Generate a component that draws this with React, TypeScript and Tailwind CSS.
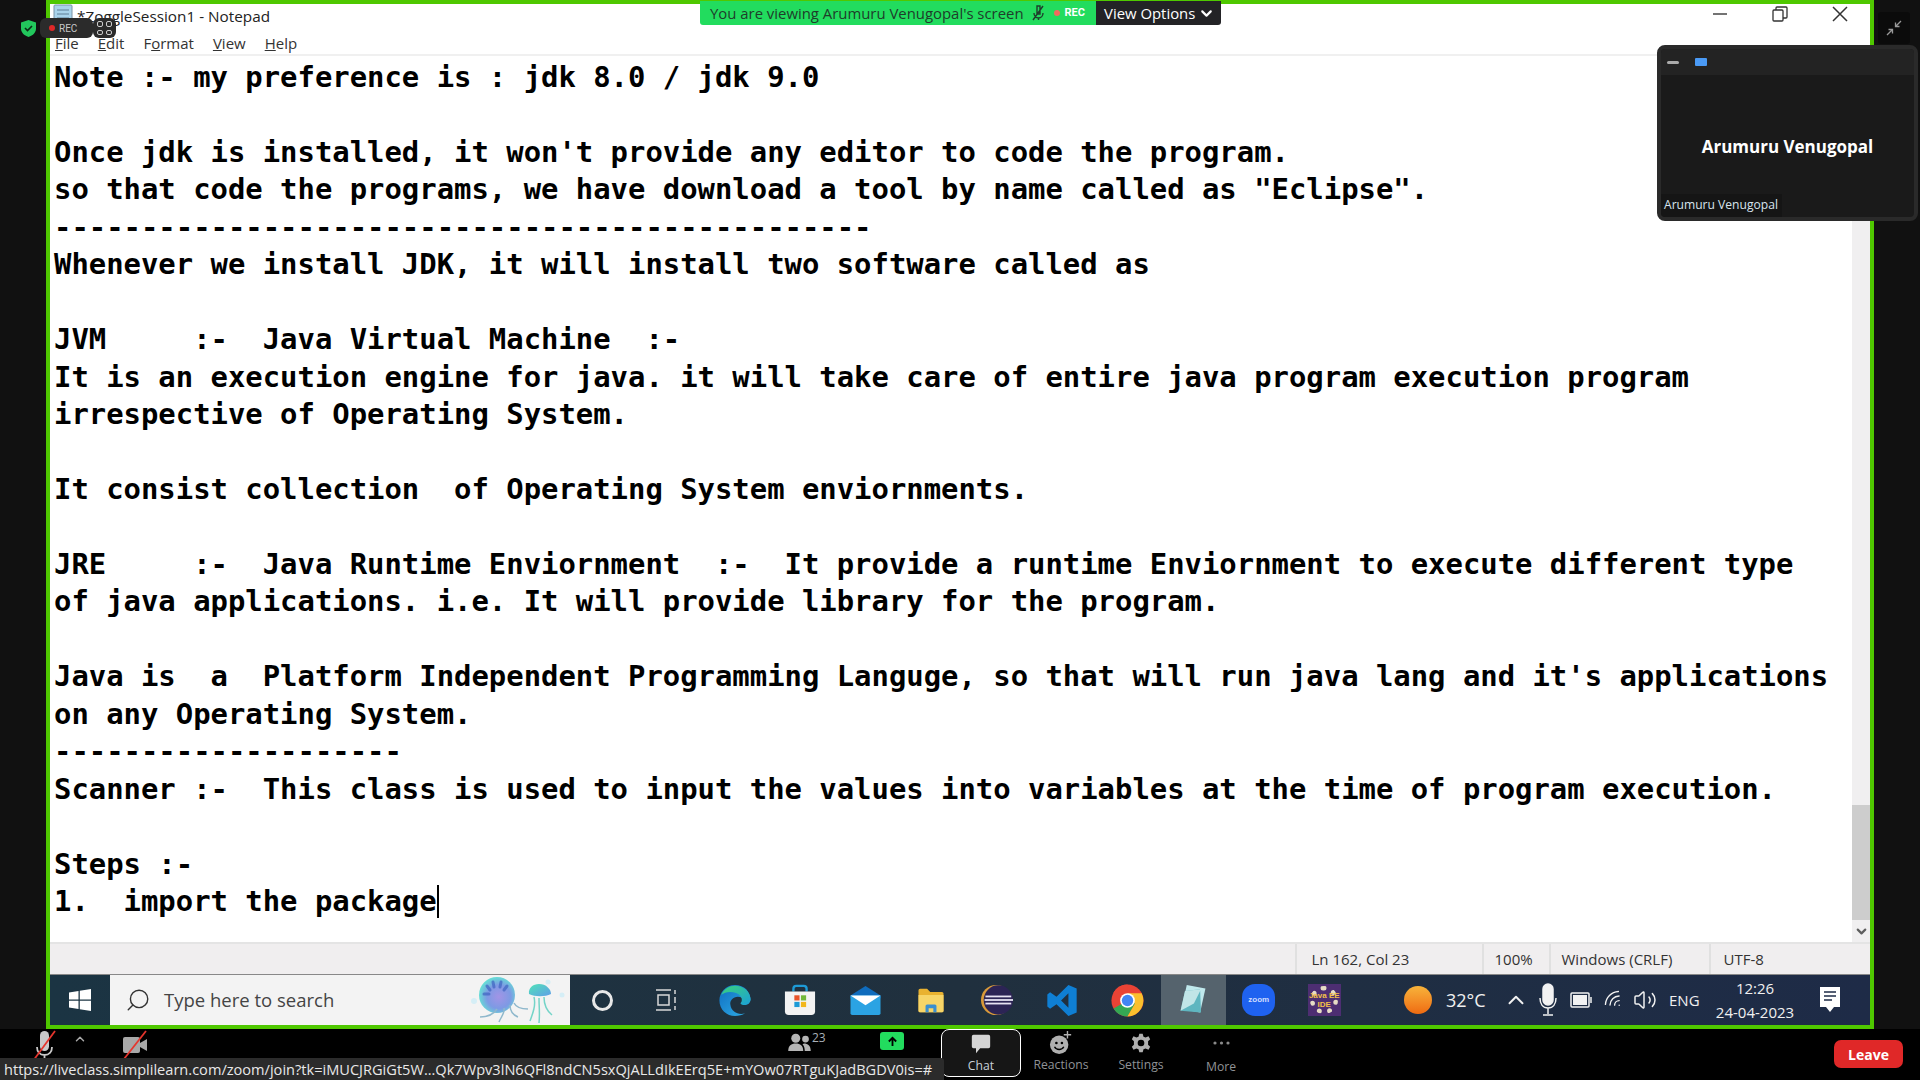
import React from "react";
import { ChevronDown, ChevronUp, Search, Volume2, Wifi } from "lucide-react";

const noteLines = [
  "Note :- my preference is : jdk 8.0 / jdk 9.0",
  "",
  "Once jdk is installed, it won't provide any editor to code the program.",
  'so that code the programs, we have download a tool by name called as "Eclipse".',
  "-----------------------------------------------",
  "Whenever we install JDK, it will install two software called as",
  "",
  "JVM     :-  Java Virtual Machine  :-",
  "It is an execution engine for java. it will take care of entire java program execution program",
  "irrespective of Operating System.",
  "",
  "It consist collection  of Operating System enviornments.",
  "",
  "JRE     :-  Java Runtime Enviornment  :-  It provide a runtime Enviornment to execute different type",
  "of java applications. i.e. It will provide library for the program.",
  "",
  "Java is  a  Platform Independent Programming Languge, so that will run java lang and it's applications",
  "on any Operating System.",
  "--------------------",
  "Scanner :-  This class is used to input the values into variables at the time of program execution.",
  "",
  "Steps :-",
];

const TaskCell = ({ children, active }: { children: React.ReactNode; active?: boolean }) => (
  <div className={`w-[65.5px] h-full flex items-center justify-center shrink-0 ${active ? "bg-[#55636d]" : ""}`}>{children}</div>
);

const ToolButton = ({ icon, label, active, low }: { icon: React.ReactNode; label: string; active?: boolean; low?: boolean }) => (
  <div
    className={`w-[80px] h-[48px] flex flex-col items-center justify-start shrink-0 ${
      active ? "border border-white rounded-lg bg-[#161616] text-[#c8d0d8]" : "text-[#8f9296]"
    }`}
  >
    <div className="h-[27px] flex items-center justify-center shrink-0">{icon}</div>
    <span className={`text-[12.200px] leading-[18px] ${low ? "mt-[2px]" : ""}`}>{label}</span>
  </div>
);

const StartLogo = () => (
  <svg width="24" height="24" viewBox="0 0 24 24" fill="#fff">
    <path d="M1 4.500 10.500 3v8.400H1zM11.800 2.800 23 1v10.400H11.800zM1 12.700h9.500V21L1 19.600zM11.800 12.700H23V23l-11.200-1.800z" />
  </svg>
);

const Jellyfish = () => (
  <svg width="100" height="50" viewBox="0 0 100 50" fill="none">
    <defs>
      <radialGradient id="jelly-a" cx="0.55" cy="0.55" r="0.55">
        <stop offset="0" stopColor="#a294e6" />
        <stop offset="0.6" stopColor="#7d9ae4" />
        <stop offset="1" stopColor="#66dcd6" />
      </radialGradient>
      <linearGradient id="jelly-b" x1="0" y1="0" x2="1" y2="1">
        <stop offset="0" stopColor="#4fe3b8" />
        <stop offset="1" stopColor="#5f9ee8" />
      </linearGradient>
    </defs>
    <circle cx="27" cy="20" r="18" fill="url(#jelly-a)" />
    <g stroke="#3f63c0" strokeWidth="3" strokeLinecap="round" opacity="0.7">
      <path d="M23 7l1 5M31 7l-1 5M17 11l3 4M37 11l-3 4M14 19h5" />
    </g>
    <path d="M27 34c-4 6-10 8-17 8M34 33c1 5-3 9-5 14M40 30c0 6 3 10 8 12M44 28c2 4 8 6 14 6" stroke="#8fb8cc" strokeWidth="1.500" />
    <path d="M59 19c-1-6 4-10 10-10 7 0 12 5 12 10-6 3-16 3-22 0z" fill="url(#jelly-b)" />
    <path d="M64 22c2 8-1 16-4 24M69 23c0 9 1 15 0 25M74 22c0 8 3 14 8 18" stroke="#74d4c8" strokeWidth="1.500" />
    <circle cx="4" cy="26" r="3" fill="#d5eef6" />
    <circle cx="78" cy="7" r="2.500" fill="#d5eef6" />
    <circle cx="92" cy="20" r="2.500" fill="#d5eef6" />
  </svg>
);

const EdgeIcon = () => (
  <svg width="34" height="33" viewBox="0 0 36 36">
    <defs>
      <linearGradient id="edge-a" x1="0" y1="0" x2="1" y2="1">
        <stop offset="0" stopColor="#3bd27a" />
        <stop offset="1" stopColor="#1a9fd8" />
      </linearGradient>
      <linearGradient id="edge-b" x1="0" y1="0" x2="1" y2="1">
        <stop offset="0" stopColor="#0f6cc0" />
        <stop offset="1" stopColor="#2fb0e8" />
      </linearGradient>
    </defs>
    <path d="M18 1C8 1 1 9 1 18c0 10 8 17 17 17 4 0 8-1 11-3-7 2-15-1-16-9-1-5 3-9 8-9 4 0 6 2 7 4h7C35 8 28 1 18 1z" fill="url(#edge-b)" />
    <path d="M3 12C6 5 12 2 18 2c9 0 16 6 17 14 0 5-3 7-7 7-2 0-4-1-4-2 2-2 2-5 0-8-4-5-16-6-21-1z" fill="url(#edge-a)" />
  </svg>
);

const StoreIcon = () => (
  <svg width="32" height="32" viewBox="0 0 34 34">
    <path d="M10 8V5a3 3 0 0 1 3-3h8a3 3 0 0 1 3 3v3" fill="none" stroke="#1d9ad6" strokeWidth="2.500" />
    <path d="M1 8h32v21a4 4 0 0 1-4 4H5a4 4 0 0 1-4-4z" fill="#f3f3f3" />
    <rect x="11" y="12" width="5.500" height="5.500" fill="#e8542a" />
    <rect x="18" y="12" width="5.500" height="5.500" fill="#72b83a" />
    <rect x="11" y="19" width="5.500" height="5.500" fill="#1d9ad6" />
    <rect x="18" y="19" width="5.500" height="5.500" fill="#f2b71d" />
  </svg>
);

const MailIcon = () => (
  <svg width="33" height="30" viewBox="0 0 36 34">
    <path d="M1 12 18 1l17 11v3H1z" fill="#0f6cbd" />
    <path d="M1 12h34v20a2 2 0 0 1-2 2H3a2 2 0 0 1-2-2z" fill="#2ba3e3" />
    <path d="M1 12h34L18 23z" fill="#fff" />
  </svg>
);

const FolderIcon = () => (
  <svg width="30" height="25" viewBox="0 0 34 32">
    <path d="M1 3a2 2 0 0 1 2-2h9l4 4h15a2 2 0 0 1 2 2v22a2 2 0 0 1-2 2H3a2 2 0 0 1-2-2z" fill="#e9b230" />
    <path d="M1 9h32v20a2 2 0 0 1-2 2H3a2 2 0 0 1-2-2z" fill="#f7d568" />
    <path d="M10 31v-8a2 2 0 0 1 2-2h10a2 2 0 0 1 2 2v8h-4v-5h-6v5z" fill="#3a8fd0" />
  </svg>
);

const EclipseIcon = () => (
  <svg width="34" height="32" viewBox="0 0 36 36">
    <circle cx="17" cy="18" r="17" fill="#d99a3a" />
    <circle cx="19.500" cy="18" r="16.500" fill="#2c2455" />
    <rect x="5" y="13" width="29" height="2" fill="#e6e2f2" />
    <rect x="4" y="17" width="32" height="2" fill="#e6e2f2" />
    <rect x="5" y="21" width="29" height="2" fill="#e6e2f2" />
  </svg>
);

const VsCodeIcon = () => (
  <svg width="32" height="33" viewBox="0 0 34 36">
    <path fillRule="evenodd" d="M24 1 33 5v26l-9 4-13-13-7 5-3-2.500v-13L4 9l7 5zM24 10l-8 8 8 8z" fill="#0f7fd4" />
  </svg>
);

const ChromeIcon = () => (
  <svg width="33" height="33" viewBox="0 0 36 36">
    <circle cx="18" cy="18" r="17.500" fill="#ea4335" />
    <path d="M18 18 2.800 26.800A17.500 17.500 0 0 0 18 35.500l8.800-15z" fill="#34a853" />
    <path d="M18 10h15.400A17.500 17.500 0 0 1 18 35.500l8-14z" fill="#fbc02d" />
    <path d="M2.800 9.200 10 21.500 18 18V.5A17.500 17.500 0 0 0 2.800 9.200z" fill="#ea4335" />
    <circle cx="18" cy="18" r="8" fill="#fff" />
    <circle cx="18" cy="18" r="6.200" fill="#4285f4" />
  </svg>
);

const NotepadIcon = () => (
  <svg width="30" height="32" viewBox="0 0 32 36">
    <path d="M9 1 30 5l-6 27L3 28z" fill="#bfe8ec" />
    <path d="M7 8 24 6l1 26L2 30z" fill="#5fb6c0" />
    <path d="M7 8 25 6l-8 16L2 30z" fill="#d9f1f0" opacity="0.8" />
  </svg>
);

const ZoomIcon = () => (
  <div className="w-[33px] h-[32px] rounded-[13px] bg-[#1f62f0] flex items-center justify-center">
    <span className="text-[8px] text-[#cfdcff] font-bold leading-none font-['Liberation_Sans',sans-serif]">zoom</span>
  </div>
);

const JavaEEIcon = () => (
  <div className="w-[33px] h-[32px] bg-[#4d2e72] flex items-center justify-center relative overflow-hidden">
    <div className="w-[28px] h-[28px] rounded-full border-[5px] border-dotted border-[#e6dcc5]" />
    <div className="absolute inset-0 flex flex-col items-center justify-center text-[#f2c04a] text-[8px] leading-[9px] font-bold font-['Liberation_Sans',sans-serif]">
      <span className="whitespace-nowrap">Java EE</span>
      <span>IDE</span>
    </div>
  </div>
);

const MicOff = () => (
  <svg width="26" height="32" viewBox="0 0 26 32" fill="none">
    <rect x="9" y="1" width="9" height="20" rx="4.500" fill="#c9c9c9" />
    <path d="M6 17c0 5 3 8 7.500 8s7.500-3 7.500-8M13.500 25v4M9 30h9" stroke="#c9c9c9" strokeWidth="1.800" />
    <path d="M24 1 2 31" stroke="#e5352d" strokeWidth="1.800" />
  </svg>
);

const VideoOff = () => (
  <svg width="26" height="30" viewBox="0 0 26 30" fill="none">
    <rect x="1" y="7" width="17" height="16" rx="2" fill="#a8a8a8" />
    <path d="m18 13 7-4v12l-7-4z" fill="#a8a8a8" />
    <path d="M24 1 2 29" stroke="#e5352d" strokeWidth="1.800" />
  </svg>
);

export default function App() {
  return (
    <div className="w-[1920px] h-[1080px] relative overflow-hidden bg-[#111111] flex flex-col font-['Open_Sans',sans-serif]">
      {/* shared screen */}
      <div className="h-[1029px] w-[1828px] ml-[46px] border-4 border-[#4fc800] flex flex-col bg-white shrink-0">
        <div className="h-[28px] pl-[3px] flex items-center shrink-0 text-[15.300px] text-[#222]">
          <svg width="20" height="22" viewBox="0 0 20 22" className="mr-[4px] mb-[6px] shrink-0">
            <rect x="1" y="1" width="18" height="20" rx="1" fill="#a9d3ea" stroke="#7a93a6" />
            <path d="M4 6h12M4 10h12M4 14h12" stroke="#5e7f96" />
          </svg>
          <span className="mb-[3px]">*ZoggleSession1 - Notepad</span>
          <div className="ml-auto mb-[9px] flex items-center text-[#333] pr-[22px]">
            <svg width="16" height="16" viewBox="0 0 16 16" className="mr-[44px]" stroke="#444" strokeWidth="1.500" fill="none"><path d="M1 8h14" /></svg>
            <svg width="16" height="16" viewBox="0 0 16 16" className="mr-[44px]" stroke="#333" strokeWidth="1.300" fill="none"><rect x="1" y="4" width="10" height="11" rx="1" /><path d="M4 4V2a1 1 0 0 1 1-1h9a1 1 0 0 1 1 1v9a1 1 0 0 1-1 1h-3" /></svg>
            <svg width="16" height="16" viewBox="0 0 16 16" stroke="#333" strokeWidth="1.500" fill="none"><path d="m1 1 14 14M15 1 1 15" /></svg>
          </div>
        </div>
        <div className="h-[24px] pl-[5px] flex items-center gap-[19px] shrink-0 text-[15px] text-[#333] border-b-2 border-[#f0f0f0]">
          <span><u>F</u>ile</span>
          <span><u>E</u>dit</span>
          <span>F<u>o</u>rmat</span>
          <span><u>V</u>iew</span>
          <span><u>H</u>elp</span>
        </div>

        <div className="flex-1 flex min-h-0">
          <div className="flex-1 pl-[4px] pt-[3px] font-['DejaVu_Sans_Mono',monospace] font-bold text-[28.900px] leading-[37.460px] text-black whitespace-pre overflow-hidden">
            {noteLines.map((line, i) => (
              <div key={i} className="h-[37.460px]">{line}</div>
            ))}
            <div className="h-[37.460px] flex items-center">
              <span>1.  import the package</span>
              <span className="w-[2px] h-[33px] bg-black" />
            </div>
          </div>
          <div className="w-[18px] bg-[#f0eff0] flex flex-col justify-end shrink-0">
            <div className="h-[115px] bg-[#cdcdcd]" />
            <div className="h-[22px] flex items-center justify-center">
              <ChevronDown size={15} strokeWidth={3.500} className="text-[#5e5e5e]" />
            </div>
          </div>
        </div>

        <div className="h-[32px] bg-[#f0eeef] border-t-2 border-[#e4e4e4] flex items-stretch text-[15px] text-[#333] shrink-0">
          <div className="w-[1244.500px]" />
          <div className="w-[187px] pl-[15px] border-l-2 border-[#e0e0e0] flex items-center">Ln 162, Col 23</div>
          <div className="w-[67px] pl-[11px] border-l-2 border-[#e0e0e0] flex items-center">100%</div>
          <div className="w-[160px] pl-[11px] border-l-2 border-[#e0e0e0] flex items-center">Windows (CRLF)</div>
          <div className="pl-[13px] border-l-2 border-[#e0e0e0] flex items-center">UTF-8</div>
        </div>

        {/* windows taskbar */}
        <div className="h-[51px] flex items-center shrink-0 bg-gradient-to-r from-[#1b3443] via-[#20303e] to-[#1e2b47] text-[#f0f0f0] border-t border-[#888]">
          <div className="w-[60px] h-full flex items-center justify-center shrink-0"><StartLogo /></div>
          <div className="w-[460px] h-full bg-[#f3f3f3] flex items-center shrink-0">
            <Search size={26} strokeWidth={1.300} className="-scale-x-100 text-[#333] ml-[15px] shrink-0" />
            <span className="ml-[13px] text-[18.500px] text-[#444] whitespace-nowrap">Type here to search</span>
            <div className="ml-auto"><Jellyfish /></div>
          </div>
          <div className="flex items-center h-full ml-[0.500px]">
            <div className="w-[64px] flex justify-center shrink-0"><div className="w-[21px] h-[21px] rounded-full border-[3px] border-[#e8e8e8]" /></div>
            <div className="w-[64px] flex justify-center shrink-0">
              <svg width="24" height="24" viewBox="0 0 24 24" fill="none" stroke="#d8d8d8" strokeWidth="1.500"><path d="M1 2h15M1 22h15M3 7h11v10H3zM20 2v4M20 9v6M20 18v4" /></svg>
            </div>
            <div className="flex items-center h-full ml-[3.500px]">
              <TaskCell><EdgeIcon /></TaskCell>
              <TaskCell><StoreIcon /></TaskCell>
              <TaskCell><MailIcon /></TaskCell>
              <TaskCell><FolderIcon /></TaskCell>
              <TaskCell><EclipseIcon /></TaskCell>
              <TaskCell><VsCodeIcon /></TaskCell>
              <TaskCell><ChromeIcon /></TaskCell>
              <TaskCell active><NotepadIcon /></TaskCell>
              <TaskCell><ZoomIcon /></TaskCell>
              <TaskCell><JavaEEIcon /></TaskCell>
            </div>
          </div>
          <div className="w-[28px] h-[28px] ml-[47px] rounded-full bg-gradient-to-b from-[#f7b33a] to-[#ee6a10] shrink-0" />
          <span className="ml-[14px] w-[46px] text-[18px] whitespace-nowrap">32°C</span>
          <ChevronUp size={26} strokeWidth={1.800} className="ml-[11px] shrink-0" />
          <svg width="20" height="34" viewBox="0 0 20 34" className="ml-[9px] shrink-0" fill="none" stroke="#f2f2f2" strokeWidth="1.500">
            <rect x="5" y="1" width="10" height="21" rx="5" fill="#f2f2f2" />
            <path d="M2 15c0 6 3 10 8 10s8-4 8-10M10 25v6M5 32h10" />
          </svg>
          <svg width="22" height="18" viewBox="0 0 22 18" className="ml-[12px] shrink-0" fill="none" stroke="#f2f2f2" strokeWidth="1.500">
            <rect x="1" y="2" width="18" height="14" rx="1" />
            <rect x="3" y="4" width="14" height="10" fill="#f2f2f2" stroke="none" />
            <path d="M21 6v6" />
          </svg>
          <Wifi size={22} strokeWidth={1.500} className="ml-[11px] shrink-0 -rotate-45" />
          <Volume2 size={24} strokeWidth={1.500} className="ml-[8px] shrink-0" />
          <span className="ml-[12px] w-[30px] text-[15px] shrink-0">ENG</span>
          <div className="w-[92px] ml-[10px] shrink-0 flex flex-col items-center text-[15px] leading-[24px]">
            <span>12:26</span>
            <span className="whitespace-nowrap">24-04-2023</span>
          </div>
          <svg width="24" height="28" viewBox="0 0 24 28" className="ml-[17px] shrink-0">
            <path d="M2 1h20v20h-6l-4 5-4-5H2z" fill="#fff" />
            <path d="M6 6h12M6 10h12M6 14h8" stroke="#1e2b47" strokeWidth="1.500" />
          </svg>
        </div>
      </div>

      {/* zoom toolbar */}
      <div className="flex-1 bg-black flex items-start text-[#a8a8a8]">
        <div className="ml-[31px] mt-[1px] shrink-0"><MicOff /></div>
        <ChevronUp size={14} strokeWidth={2.500} className="ml-[16px] mt-[3px] shrink-0" />
        <div className="ml-[35px] mt-[1px] shrink-0"><VideoOff /></div>

        <div className="ml-[639px] mt-[4px] shrink-0 flex items-start w-[60px]">
          <svg width="25" height="18" viewBox="0 0 30 24" fill="#b5b5b5">
            <circle cx="10" cy="7" r="6" /><circle cx="23" cy="8" r="4.500" />
            <path d="M0 24c0-7 4-10 10-10s10 3 10 10zM21 14c5 0 9 3 9 10h-8c0-4-1-7-3-9z" />
          </svg>
          <span className="text-[12px] leading-[10px] text-[#a8b0b8]">23</span>
        </div>
        <div className="ml-[33px] mt-[3px] w-[24px] h-[18px] bg-[#22dc5e] rounded-[3px] flex items-center justify-center shrink-0">
          <svg width="11" height="11" viewBox="0 0 12 12" fill="none" stroke="#000" strokeWidth="2"><path d="M6 11V2M2 6l4-4 4 4" /></svg>
        </div>
        <div className="ml-[37px] shrink-0">
          <ToolButton
            active
            label="Chat"
            icon={
              <svg width="20" height="20" viewBox="0 0 24 24" fill="#d5d5d5"><path d="M3 1h18a2 2 0 0 1 2 2v12a2 2 0 0 1-2 2H11l-5 6v-6H3a2 2 0 0 1-2-2V3a2 2 0 0 1 2-2z" /></svg>
            }
          />
        </div>
        <ToolButton
          label="Reactions"
          icon={
            <svg width="24" height="24" viewBox="0 0 24 26" fill="#b0b0b0">
              <circle cx="10" cy="15" r="10" />
              <circle cx="7" cy="13" r="1.400" fill="#000" /><circle cx="13" cy="13" r="1.400" fill="#000" />
              <path d="M5 17c2 4 8 4 10 0" stroke="#000" strokeWidth="1.500" fill="none" />
              <path d="M19 0v8M15 4h8" stroke="#b0b0b0" strokeWidth="1.500" />
            </svg>
          }
        />
        <ToolButton
          label="Settings"
          icon={
            <svg width="20" height="20" viewBox="0 0 24 24" fill="#b0b0b0">
              <path fillRule="evenodd" d="M10 1h4l1 3.500 2.500 1L21 4l2 3.500-2.500 2.500v4l2.500 2.500L21 20l-3.500-1.500-2.500 1L14 23h-4l-1-3.500-2.500-1L3 20l-2-3.500L3.500 14v-4L1 7.500 3 4l3.500 1.500 2.500-1zM12 8a4 4 0 1 0 0 8 4 4 0 0 0 0-8z" />
            </svg>
          }
        />
        <ToolButton
          low
          label="More"
          icon={
            <svg width="17" height="4" viewBox="0 0 17 4" fill="#8a8a8a"><circle cx="2" cy="2" r="1.600" /><circle cx="8.500" cy="2" r="1.600" /><circle cx="15" cy="2" r="1.600" /></svg>
          }
        />
        <div className="ml-auto mr-[17px] mt-[11px] w-[69px] h-[28px] rounded-[7px] bg-[#e02828] text-white text-[14px] font-bold flex items-center justify-center">Leave</div>
      </div>

      {/* overlays */}
      <div className="absolute top-[1px] left-[700px] flex h-[24px] items-stretch text-[14.900px]">
        <div className="w-[396px] bg-[#22dc5e] rounded-bl-[3px] flex items-center pl-[10px] text-[#1f3d2b] whitespace-nowrap">
          <span>You are viewing Arumuru Venugopal's screen</span>
          <svg width="14" height="16" viewBox="0 0 14 16" className="ml-[7px] shrink-0" fill="none" stroke="#1f3d2b" strokeWidth="1.400"><path d="M6 1h3v8H6zM3 8c0 3 2 5 4.500 5S12 11 12 8M7.500 13v2M12 1 2 15" /></svg>
          <span className="w-[6px] h-[6px] rounded-full bg-[#f26a5e] ml-[9px] shrink-0" />
          <span className="ml-[5px] text-[11px] font-bold text-white font-['Roboto',sans-serif]">REC</span>
        </div>
        <div className="w-[125px] bg-[#232326] rounded-br-[3px] flex items-center pl-[8px] text-white">
          <span>View Options</span>
          <ChevronDown size={17} strokeWidth={3} className="ml-[3px]" />
        </div>
      </div>

      <div className="absolute left-[21px] top-[18px] w-[15px] h-[20px] flex items-center justify-center">
        <svg width="15" height="17" viewBox="0 0 15 17">
          <path d="M7.500 0 15 2.500v6c0 4-3 7-7.500 8.500C3 15.500 0 12.500 0 8.500v-6z" fill="#22c75c" />
          <path d="m4 8 2.500 2.500L11 6" fill="none" stroke="#0b2b16" strokeWidth="1.600" />
        </svg>
      </div>
      <div className="absolute left-[40px] top-[18px] w-[53px] h-[20px] bg-[#2b2b2b] rounded-[6px] flex items-center pl-[9px] text-[10px] text-[#c8c8c8] font-['Roboto',sans-serif]">
        <span className="w-[6px] h-[6px] rounded-full bg-[#e02828] mr-[4px]" />
        REC
      </div>
      <div className="absolute left-[93px] top-[18px] w-[23px] h-[20px] bg-[#2b2b2b] rounded-[6px] grid grid-cols-2 gap-[3px] p-[3px] px-[4px]">
        <span className="border border-[#ccc] rounded-[2px]" />
        <span className="border border-[#ccc] rounded-[2px]" />
        <span className="border border-[#ccc] rounded-[2px]" />
        <span className="border border-[#ccc] rounded-[2px]" />
      </div>

      <div className="absolute left-[1878px] top-[12px] w-[32px] h-[32px] bg-[#0b0b0b] rounded-[3px] flex items-center justify-center">
        <svg width="16" height="16" viewBox="0 0 16 16" fill="none" stroke="#9a9a9a" strokeWidth="1.300">
          <path d="M15 1 9.500 6.500M9.500 2.500v4h4M1 15l5.500-5.500M2.500 9.500h4v4" />
        </svg>
      </div>

      <div className="absolute left-[1657px] top-[45px] w-[261px] h-[176px] rounded-[8px] border-[4px] border-[#2a2a2a] bg-[#1a1a1a] overflow-hidden flex flex-col">
        <div className="h-[26px] bg-[#232323] flex items-center pl-[6px] shrink-0">
          <span className="w-[12px] h-[3px] rounded-sm bg-[#aaa]" />
          <span className="w-[12px] h-[8px] rounded-[1px] bg-[#4a9af5] ml-[16px]" />
        </div>
        <div className="flex-1 flex items-center justify-center pt-[24px] text-white font-bold text-[17px]">Arumuru Venugopal</div>
        <div className="h-[23px] w-[121px] bg-[#151515] text-[12.100px] text-[#d8e4ee] flex items-center pl-[3px] whitespace-nowrap">Arumuru Venugopal</div>
      </div>

      <div className="absolute left-0 bottom-0 w-[944px] h-[22px] bg-[#2b2b2b] rounded-tr-[3px] text-[14.580px] leading-[22px] pl-[4px] text-[#e8e8e8] whitespace-nowrap overflow-hidden">
        https://liveclass.simplilearn.com/zoom/join?tk=iMUCJRGiGt5W...Qk7Wpv3lN6QFl8ndCN5sxQjALLdIkEErq5E+mYOw07RTguKJadBGDV0is=#
      </div>
    </div>
  );
}
